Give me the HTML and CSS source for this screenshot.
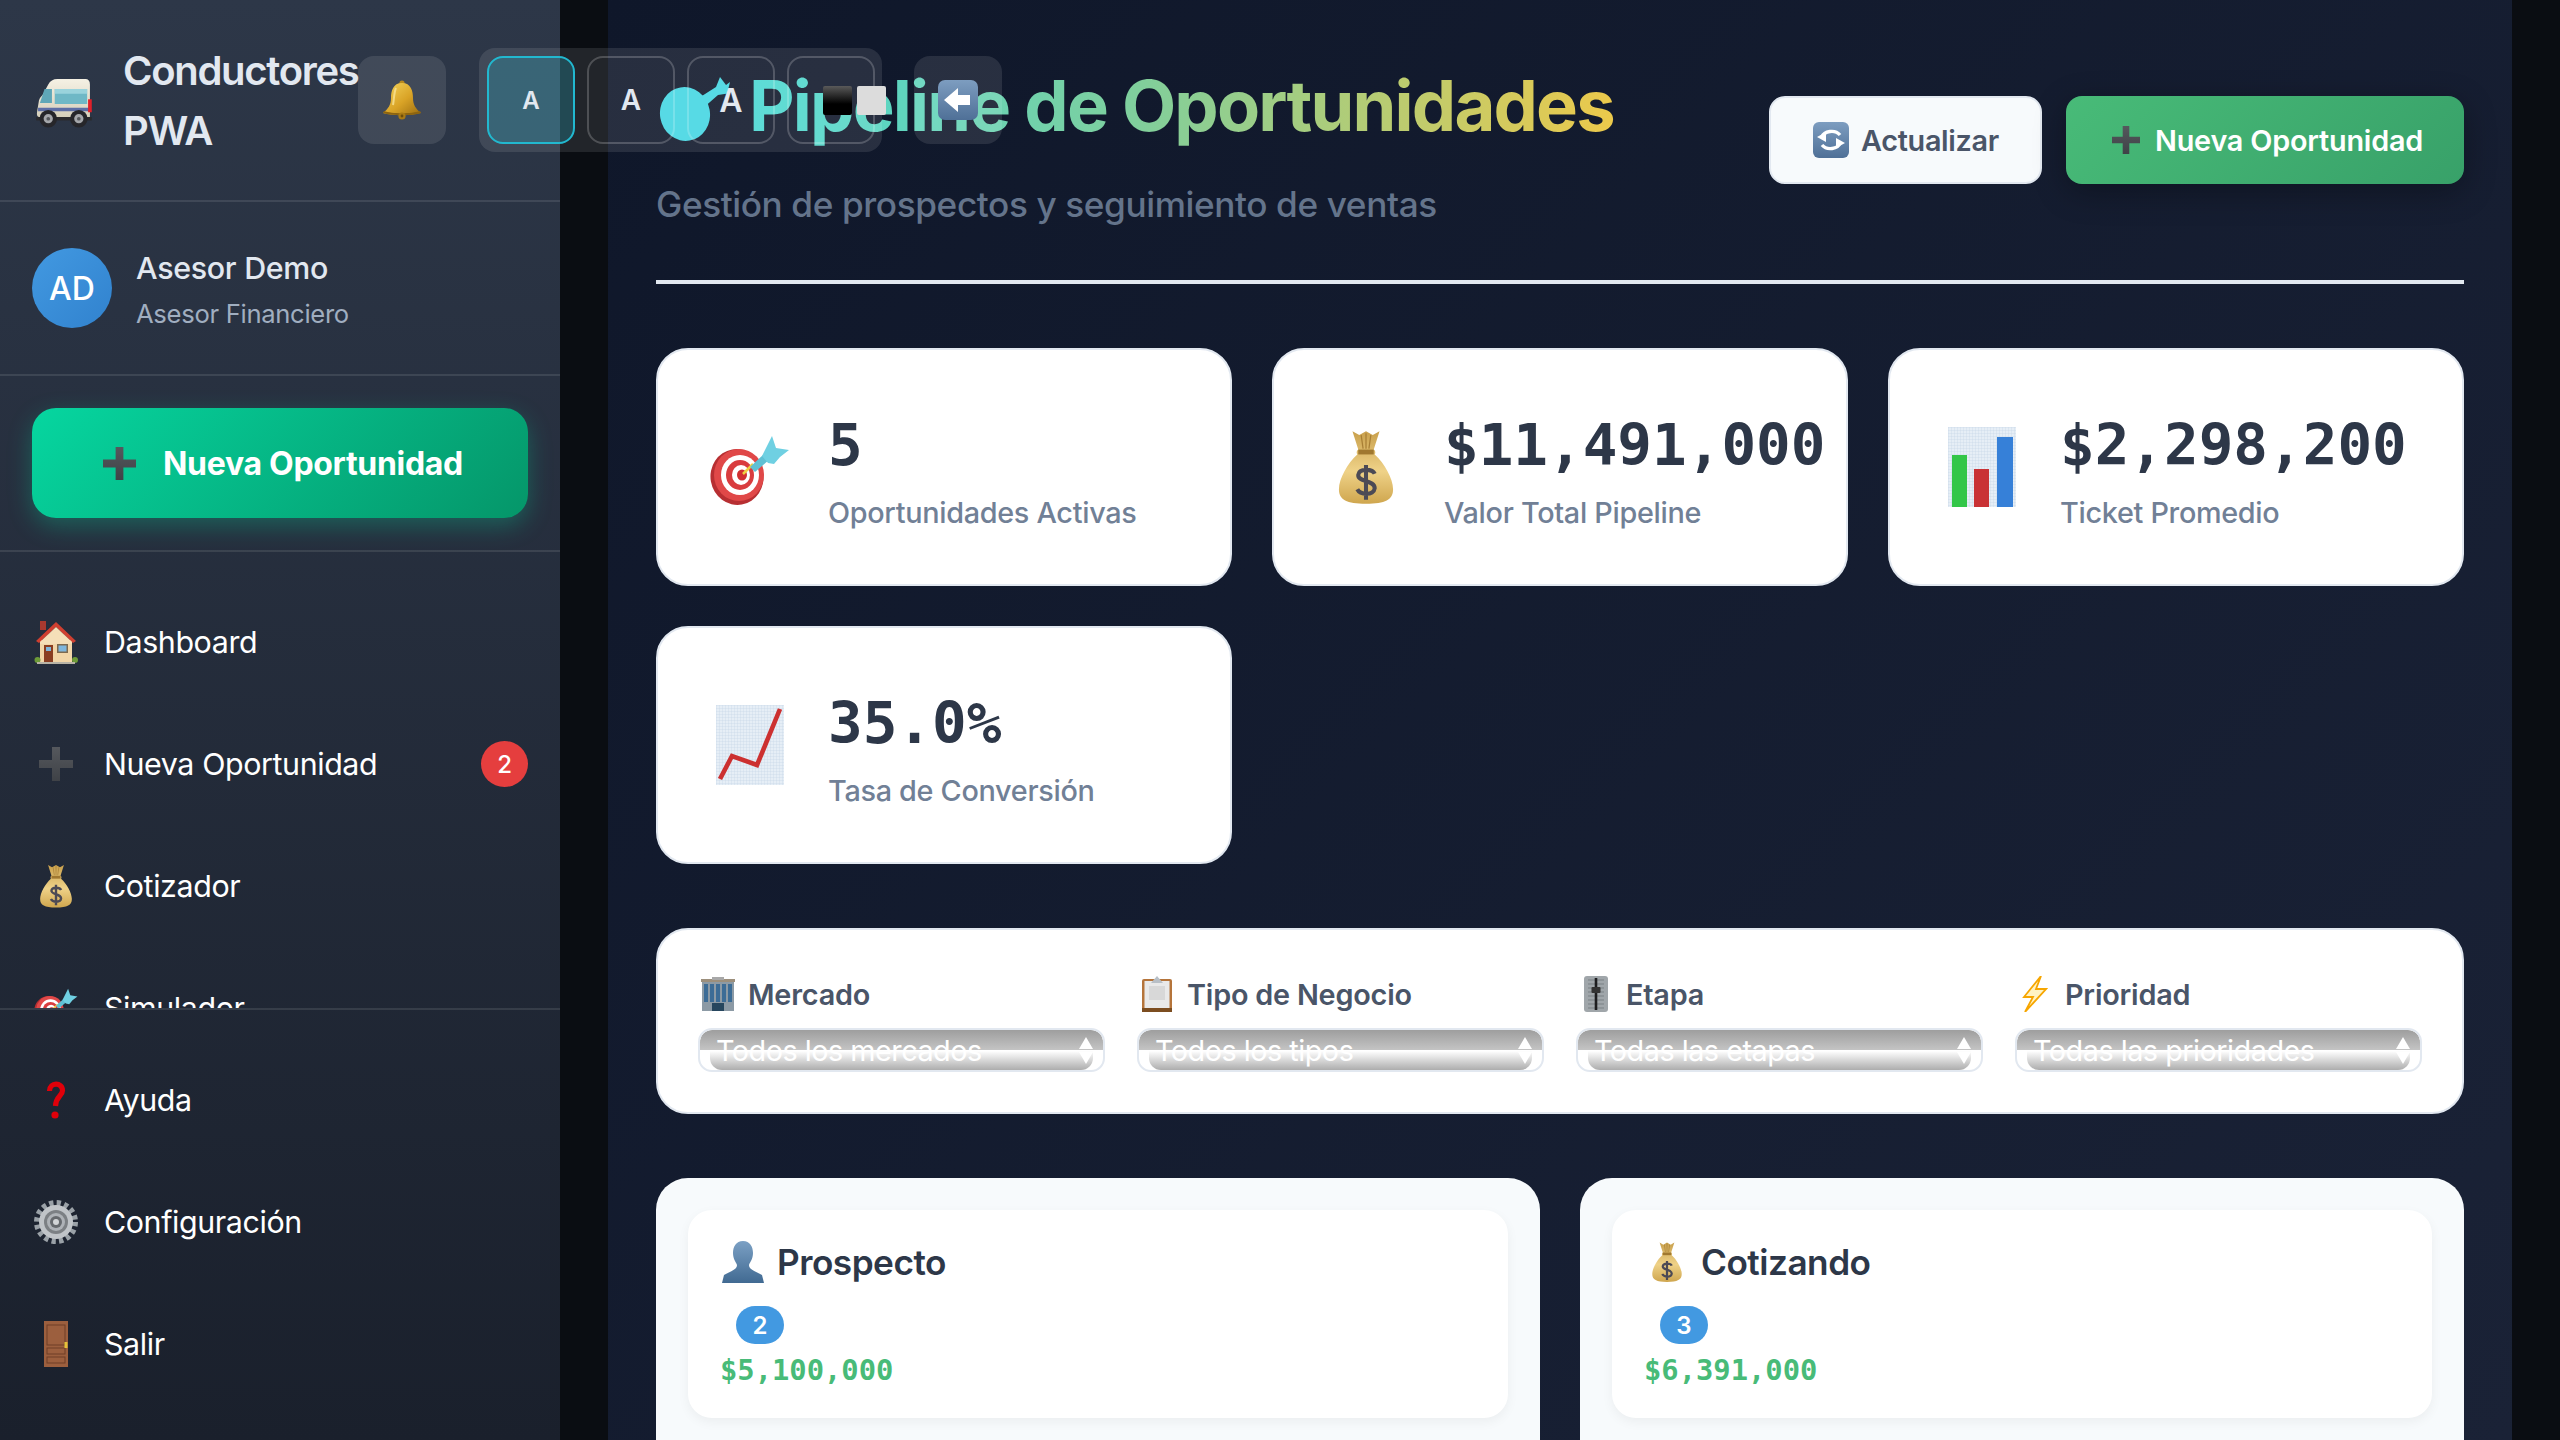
FILE: index.html
```html
<!DOCTYPE html>
<html lang="es">
<head>
<meta charset="utf-8">
<title>Pipeline de Oportunidades</title>
<link rel="stylesheet" href="styles.css">
</head>
<body>
<svg class="defs" width="0" height="0" aria-hidden="true">
  <defs>
    <linearGradient id="gGold" x1="0" y1="0" x2="1" y2="1"><stop offset="0" stop-color="#f5d65e"/><stop offset=".55" stop-color="#d9a326"/><stop offset="1" stop-color="#9a6c10"/></linearGradient>
    <linearGradient id="gBag" x1="0" y1="0" x2="0" y2="1"><stop offset="0" stop-color="#c9a04c"/><stop offset=".55" stop-color="#efd288"/><stop offset="1" stop-color="#cfa64e"/></linearGradient>
    <linearGradient id="gBlue" x1="0" y1="0" x2="0" y2="1"><stop offset="0" stop-color="#7d9dc0"/><stop offset="1" stop-color="#4f7097"/></linearGradient>
    <linearGradient id="gPlus" x1="0" y1="0" x2="0" y2="1"><stop offset="0" stop-color="#55585d"/><stop offset="1" stop-color="#3f4247"/></linearGradient>
    <linearGradient id="gBust" x1="0" y1="0" x2="0" y2="1"><stop offset="0" stop-color="#7ba0c4"/><stop offset="1" stop-color="#416a92"/></linearGradient>
    <linearGradient id="gVan" x1="0" y1="0" x2="0" y2="1"><stop offset="0" stop-color="#f5f1e4"/><stop offset="1" stop-color="#d6d0bb"/></linearGradient>
    <pattern id="pGrid" width="3" height="3" patternUnits="userSpaceOnUse"><rect width="3" height="3" fill="#e6eef6"/><path d="M0 0H3M0 0V3" stroke="#c3d2e2" stroke-width=".6"/></pattern>
    <symbol id="i-van" viewBox="0 0 64 54">
      <path d="M3 36 5 24Q6 21 9 18L15 7Q18 1 25 1H55Q60 1 60 7V42H5Q2 42 3 36Z" fill="url(#gVan)"/>
      <path d="M22 12H57V28H22Z" fill="#6fb8c6"/><path d="M22 12H57V17H22Z" fill="#9ad3dc"/>
      <path d="M11 12H19V27H6Z" fill="#5fa7b8"/>
      <path d="M4 32H60V36H4Z" fill="#5d6ea6"/>
      <path d="M58 23H62V37H58Z" fill="#e0202a"/>
      <path d="M2 42H62V46H2Z" fill="#2b2b2e"/>
      <circle cx="15" cy="44" r="9.5" fill="#26262a"/><circle cx="15" cy="44" r="5" fill="#a5a7ab"/><circle cx="15" cy="44" r="2" fill="#55575b"/>
      <circle cx="48" cy="44" r="9.5" fill="#26262a"/><circle cx="48" cy="44" r="5" fill="#a5a7ab"/><circle cx="48" cy="44" r="2" fill="#55575b"/>
    </symbol>
    <symbol id="i-bell" viewBox="0 0 40 40">
      <circle cx="20" cy="3" r="2.6" fill="#b98a1e"/>
      <path d="M20 3C11 3 9 11 9 18 9 25 6 29 1 33 10 36 30 36 39 33 34 29 31 25 31 18 31 11 29 3 20 3Z" fill="url(#gGold)"/>
      <path d="M14 8C12 12 12 20 11 25" stroke="#fbe9a4" stroke-width="2" fill="none" opacity=".7"/>
      <path d="M1 33C10 36 30 36 39 33L38 31C30 34 10 34 2 31Z" fill="#8d6410"/>
      <circle cx="20" cy="36" r="3.6" fill="#a97a14"/><circle cx="20" cy="36" r="1.4" fill="#6e4c0a"/>
    </symbol>
    <symbol id="i-dart" viewBox="0 0 80 70">
      <ellipse cx="27" cy="41" rx="26.5" ry="28" fill="#b72f32" transform="rotate(-10 27 41)"/>
      <ellipse cx="29" cy="39" rx="25" ry="26" fill="#e04848"/><ellipse cx="30" cy="39" rx="19" ry="20" fill="#fff"/><ellipse cx="30" cy="39" rx="14" ry="15" fill="#d93c3e"/><ellipse cx="31" cy="39" rx="9" ry="10" fill="#fff"/><ellipse cx="32" cy="39" rx="5" ry="5.5" fill="#d02f30"/>
      <path d="M33 38 43 28" stroke="#f0d040" stroke-width="2.5"/>
      <path d="M40 31 54 18 60 23 45 36Z" fill="#5fc0d4"/>
      <path d="M52 20 62 0 66 12 79 14 70 21 64 28 58 27Z" fill="#6fd0e2"/>
    </symbol>
    <symbol id="i-dartmask" viewBox="0 0 80 64">
      <ellipse cx="29" cy="37" rx="25" ry="27" fill="#44d6e2" transform="rotate(-10 29 37)"/>
      <path d="M38 24 60 10 64 0 70 8 74 5 72 13 75 16 62 18 46 32Z" fill="#44d6e2"/>
    </symbol>
    <symbol id="i-bag" viewBox="0 0 60 76">
      <path d="M16 1 23 5 30 1 37 5 44 1 38 20C40 21 40 24 39 25 49 34 58 50 58 61 58 72 50 76 30 76 10 76 2 72 2 61 2 50 11 34 21 25 20 24 20 21 22 20Z" fill="url(#gBag)"/>
      <path d="M22 20H38V25H22Z" fill="#a07830"/>
      <path d="M25 5 27 19M35 5 33 19M30 3V19" stroke="#a87f35" stroke-width="1.3"/>
      <path d="M39 45C37 40 23 39 22 46 21 54 39 51 39 60 38 68 24 67 21 61M30 36V72" stroke="#4c4a55" stroke-width="4.2" fill="none"/>
    </symbol>
    <symbol id="i-bars" viewBox="0 0 68 80">
      <rect width="68" height="80" fill="url(#pGrid)"/>
      <rect x="4" y="28" width="15" height="52" fill="#33c648"/>
      <rect x="26" y="42" width="15" height="38" fill="#c93235"/>
      <rect x="49" y="10" width="16" height="70" fill="#3680d8"/>
    </symbol>
    <symbol id="i-chart" viewBox="0 0 68 80">
      <rect width="68" height="80" fill="url(#pGrid)"/>
      <path d="M4 74 16 51 41 60 64 4" fill="none" stroke="#cc3030" stroke-width="4.6"/>
    </symbol>
    <symbol id="i-refresh" viewBox="0 0 36 36">
      <rect width="36" height="36" rx="6" fill="url(#gBlue)"/>
      <path d="M9 15C11 9 22 7 27 13" stroke="#fff" stroke-width="3.4" fill="none"/><path d="M4 15 13 10 13 20Z" fill="#fff"/>
      <path d="M27 21C25 27 14 29 9 23" stroke="#fff" stroke-width="3.4" fill="none"/><path d="M32 21 23 26 23 16Z" fill="#fff"/>
    </symbol>
    <symbol id="i-back" viewBox="0 0 40 40">
      <rect width="40" height="40" rx="7" fill="url(#gBlue)"/>
      <path d="M6 20 20 8V15H32V25H20V32Z" fill="#fff"/>
    </symbol>
    <symbol id="i-plus" viewBox="0 0 34 34">
      <path d="M13 0H21V13H34V21H21V34H13V21H0V13H13Z" fill="url(#gPlus)"/>
    </symbol>
    <symbol id="i-house" viewBox="0 0 44 44">
      <path d="M6 1H12V10H6Z" fill="#a8392f"/>
      <path d="M6 20H38V43H6Z" fill="#f2d6a8"/>
      <path d="M2 21 22 2 42 21 39 23 22 7 5 23Z" fill="#cf3f30"/>
      <path d="M22 7 38 22V24H6V22Z" fill="#f5dfb8"/>
      <rect x="10" y="25" width="9" height="17" fill="#8a3e22"/><rect x="12" y="27" width="5" height="4" fill="#7fb6dc"/>
      <rect x="23" y="24" width="11" height="9" fill="#7d6a50"/><rect x="24.5" y="25.5" width="8" height="6" fill="#7fb6dc"/>
      <circle cx="3.5" cy="40" r="3" fill="#6d9a38"/><circle cx="41" cy="40" r="3" fill="#6d9a38"/>
      <rect x="3" y="42" width="38" height="2" fill="#b8b3a6"/>
    </symbol>
    <symbol id="i-question" viewBox="0 0 20 38">
      <path d="M3.5 10C3.5 1 16.5 1 16.5 9.5 16.5 15 10 15 9.5 25" fill="none" stroke="#e0000a" stroke-width="5.2"/>
      <circle cx="9" cy="34" r="3.6" fill="#e0000a"/>
    </symbol>
    <symbol id="i-gear" viewBox="0 0 44 44">
      <circle cx="22" cy="22" r="19" fill="none" stroke="#9aa1a7" stroke-width="6" stroke-dasharray="4.2 3.27"/>
      <circle cx="22" cy="22" r="17" fill="#c0c4c8"/>
      <circle cx="22" cy="22" r="12" fill="#7c8084"/><circle cx="22" cy="22" r="9" fill="#aeb2b7"/><circle cx="22" cy="22" r="6" fill="#666a6e"/><circle cx="22" cy="22" r="3" fill="#d2d5d7"/>
    </symbol>
    <symbol id="i-door" viewBox="0 0 24 46">
      <rect width="24" height="46" fill="#9c5f3e"/>
      <g fill="none" stroke="#6f3e26" stroke-width="1"><rect x="3" y="4" width="18" height="20"/><rect x="3" y="27" width="18" height="6"/><rect x="3" y="36" width="18" height="6"/></g>
      <rect x="20.5" y="21" width="3" height="6" fill="#e4c23a"/>
    </symbol>
    <symbol id="i-building" viewBox="0 0 34 34">
      <rect x="1" y="3" width="32" height="31" fill="#8c9aa5"/><rect y="2" width="34" height="3" fill="#9c8f7c"/><rect x="11" y="0" width="12" height="3" fill="#a8a8a8"/>
      <g fill="#3c6c96"><rect x="3" y="7" width="4" height="18"/><rect x="9" y="7" width="4" height="18"/><rect x="15" y="7" width="4" height="18"/><rect x="21" y="7" width="4" height="18"/><rect x="27" y="7" width="4" height="18"/></g>
      <rect x="11" y="26" width="12" height="8" fill="#26465e"/>
    </symbol>
    <symbol id="i-clip" viewBox="0 0 30 36">
      <rect y="3" width="30" height="33" rx="2" fill="#b5743a"/><rect x="2.5" y="5" width="25" height="27" fill="#e9e9e9"/>
      <rect x="7" y="10" width="16" height="14" fill="#d8d8d8"/>
      <path d="M9 7 15 0 21 7Z" fill="#b8bfc6"/><rect x="0" y="32" width="30" height="4" fill="#7c4d20"/>
    </symbol>
    <symbol id="i-knob" viewBox="0 0 24 36">
      <rect width="24" height="36" rx="3" fill="#a0a6aa"/>
      <path d="M4 4H20M4 8H20M4 12H20M4 16H20M4 20H20M4 24H20M4 28H20M4 32H20" stroke="#7b8185" stroke-width="1"/>
      <rect x="10.7" y="2" width="2.6" height="32" fill="#1d1d1f"/><rect x="7.5" y="11" width="9" height="6" rx="1" fill="#333"/>
    </symbol>
    <symbol id="i-bolt" viewBox="0 0 26 36">
      <path d="M19 0 2 21H11L3 36 24 13H14Z" fill="#fff3c4" stroke="#f7a600" stroke-width="1.8"/>
    </symbol>
    <symbol id="i-bust" viewBox="0 0 42 42">
      <path d="M21 0C14 0 11 6 11 12 11 18 14 21 15 24 15 29 7 31 2 34L0 42H42L40 34C35 31 27 29 27 24 28 21 31 18 31 12 31 6 28 0 21 0Z" fill="url(#gBust)"/>
    </symbol>
    <symbol id="i-up" viewBox="0 0 14 12"><path d="M7 0 14 12H0Z" fill="#fff"/></symbol>
    <symbol id="i-down" viewBox="0 0 14 12"><path d="M7 12 14 0H0Z" fill="#fff"/></symbol>
  </defs>
</svg>

<div class="toolbar">
  <button class="tool-btn bell" aria-label="Notificaciones"><svg class="bell-ico"><use href="#i-bell"/></svg></button>
  <div class="font-group">
    <button class="font-btn active fs-s">A</button>
    <button class="font-btn fs-m">A</button>
    <button class="font-btn fs-l">A</button>
    <button class="font-btn contrast" aria-label="Contraste"><span class="sq-black"></span><span class="sq-white"></span></button>
  </div>
  <button class="tool-btn back" aria-label="Volver"><svg class="back-ico"><use href="#i-back"/></svg></button>
</div>

<div class="app">
  <aside class="sidebar">
    <header class="brand">
      <svg class="brand-ico"><use href="#i-van"/></svg>
      <div class="brand-name">Conductores<br>PWA</div>
    </header>
    <section class="user">
      <div class="avatar">AD</div>
      <div class="user-info">
        <div class="user-name">Asesor Demo</div>
        <div class="user-role">Asesor Financiero</div>
      </div>
    </section>
    <section class="cta-wrap">
      <button class="cta"><svg class="cta-ico"><use href="#i-plus"/></svg><span>Nueva Oportunidad</span></button>
    </section>
    <nav class="nav">
      <a class="nav-item"><span class="nav-ico"><svg class="s-house"><use href="#i-house"/></svg></span><span>Dashboard</span></a>
      <a class="nav-item"><span class="nav-ico"><svg class="s-plus"><use href="#i-plus"/></svg></span><span>Nueva Oportunidad</span><span class="nav-badge">2</span></a>
      <a class="nav-item"><span class="nav-ico"><svg class="s-bag"><use href="#i-bag"/></svg></span><span>Cotizador</span></a>
      <a class="nav-item"><span class="nav-ico"><svg class="s-dart"><use href="#i-dart"/></svg></span><span>Simulador</span></a>
    </nav>
    <div class="nav-bottom">
      <a class="nav-item"><span class="nav-ico"><svg class="s-question"><use href="#i-question"/></svg></span><span>Ayuda</span></a>
      <a class="nav-item"><span class="nav-ico"><svg class="s-gear"><use href="#i-gear"/></svg></span><span>Configuración</span></a>
      <a class="nav-item"><span class="nav-ico"><svg class="s-door"><use href="#i-door"/></svg></span><span>Salir</span></a>
    </div>
  </aside>

  <main class="main">
    <header class="page-head">
      <div>
        <h1 class="title"><svg class="title-ico"><use href="#i-dartmask"/></svg><span class="title-text">Pipeline de Oportunidades</span></h1>
        <p class="subtitle">Gestión de prospectos y seguimiento de ventas</p>
      </div>
      <div class="head-actions">
        <button class="btn btn-light"><svg class="btn-ico-r"><use href="#i-refresh"/></svg><span>Actualizar</span></button>
        <button class="btn btn-green"><svg class="btn-ico-p"><use href="#i-plus"/></svg><span>Nueva Oportunidad</span></button>
      </div>
    </header>

    <section class="stats">
      <article class="stat"><span class="stat-ico"><svg class="st-dart"><use href="#i-dart"/></svg></span><div class="stat-body"><div class="stat-value">5</div><div class="stat-label">Oportunidades Activas</div></div></article>
      <article class="stat"><span class="stat-ico"><svg class="st-bag"><use href="#i-bag"/></svg></span><div class="stat-body"><div class="stat-value">$11,491,000</div><div class="stat-label">Valor Total Pipeline</div></div></article>
      <article class="stat"><span class="stat-ico"><svg class="st-chart"><use href="#i-bars"/></svg></span><div class="stat-body"><div class="stat-value">$2,298,200</div><div class="stat-label">Ticket Promedio</div></div></article>
      <article class="stat"><span class="stat-ico"><svg class="st-chart"><use href="#i-chart"/></svg></span><div class="stat-body"><div class="stat-value">35.0%</div><div class="stat-label">Tasa de Conversión</div></div></article>
    </section>

    <section class="filters">
      <div class="filter">
        <label class="filter-label"><span class="f-ico"><svg class="f-building"><use href="#i-building"/></svg></span>Mercado</label>
        <div class="select"><select><option>Todos los mercados</option></select><svg class="arr arr-up"><use href="#i-up"/></svg><svg class="arr arr-down"><use href="#i-down"/></svg></div>
      </div>
      <div class="filter">
        <label class="filter-label"><span class="f-ico"><svg class="f-clip"><use href="#i-clip"/></svg></span>Tipo de Negocio</label>
        <div class="select"><select><option>Todos los tipos</option></select><svg class="arr arr-up"><use href="#i-up"/></svg><svg class="arr arr-down"><use href="#i-down"/></svg></div>
      </div>
      <div class="filter">
        <label class="filter-label"><span class="f-ico"><svg class="f-knob"><use href="#i-knob"/></svg></span>Etapa</label>
        <div class="select"><select><option>Todas las etapas</option></select><svg class="arr arr-up"><use href="#i-up"/></svg><svg class="arr arr-down"><use href="#i-down"/></svg></div>
      </div>
      <div class="filter">
        <label class="filter-label"><span class="f-ico"><svg class="f-bolt"><use href="#i-bolt"/></svg></span>Prioridad</label>
        <div class="select"><select><option>Todas las prioridades</option></select><svg class="arr arr-up"><use href="#i-up"/></svg><svg class="arr arr-down"><use href="#i-down"/></svg></div>
      </div>
    </section>

    <section class="board">
      <div class="column">
        <div class="stage">
          <h3 class="stage-title"><span class="stage-ico"><svg class="k-bust"><use href="#i-bust"/></svg></span>Prospecto</h3>
          <span class="stage-badge">2</span>
          <div class="stage-amount">$5,100,000</div>
        </div>
      </div>
      <div class="column">
        <div class="stage">
          <h3 class="stage-title"><span class="stage-ico"><svg class="k-bag"><use href="#i-bag"/></svg></span>Cotizando</h3>
          <span class="stage-badge">3</span>
          <div class="stage-amount">$6,391,000</div>
        </div>
      </div>
    </section>
  </main>
</div>
</body>
</html>
```

FILE: styles.css
```css
* { box-sizing: border-box; }
html, body { margin: 0; height: 100%; }
body {
  background: #0a0d12;
  font-family: Inter, "Noto Sans", sans-serif;
  overflow: hidden;
  position: relative;
}
.defs { position: absolute; }
svg { display: block; }
button { font-family: inherit; cursor: pointer; }

.app { display: flex; height: 1440px; }

/* Sidebar */
.sidebar {
  width: 560px;
  flex: none;
  height: 1440px;
  display: flex;
  flex-direction: column;
  overflow: hidden;
  color: #fff;
  background: linear-gradient(180deg, #2d3748 0%, #1a202c 100%);
}
.brand {
  height: 202px;
  flex: none;
  display: flex;
  align-items: center;
  gap: 29px;
  padding-left: 34px;
  border-bottom: 2px solid rgba(255,255,255,.1);
}
.brand-ico { width: 60px; height: 50px; margin-top: 6px; }
.brand-name { font-size: 40px; line-height: 60px; font-weight: 600; letter-spacing: -1.3px; color: #e2e8f0; padding-top: 2px; }

.user {
  height: 174px;
  flex: none;
  display: flex;
  align-items: center;
  gap: 24px;
  padding-left: 32px;
  border-bottom: 2px solid rgba(255,255,255,.1);
}
.avatar {
  width: 80px; height: 80px;
  border-radius: 50%;
  background: linear-gradient(135deg, #4299e1, #3182ce);
  display: flex; align-items: center; justify-content: center;
  font-size: 32px; font-weight: 500; color: #fff;
}
.user-info { padding-top: 3px; }
.user-name { font-size: 30.4px; line-height: 44px; font-weight: 500; letter-spacing: -.3px; color: #e2e8f0; }
.user-role { font-size: 25.6px; line-height: 40px; margin-top: 4px; letter-spacing: -.3px; color: #a0aec0; }

.cta-wrap {
  height: 176px;
  flex: none;
  padding: 32px;
  border-bottom: 2px solid rgba(255,255,255,.1);
}
.cta {
  width: 100%; height: 110px;
  border: 0;
  border-radius: 24px;
  background: linear-gradient(135deg, #06d6a0, #059669);
  box-shadow: 0 8px 24px rgba(6,214,160,.3);
  color: #fff;
  font-size: 32px; font-weight: 700; letter-spacing: -.3px;
  display: flex; align-items: center; justify-content: center; gap: 27px;
  padding: 0 0 0 6px;
}
.cta-ico { width: 33px; height: 33px; }

.nav {
  flex: 1;
  min-height: 0;
  overflow: hidden;
  padding-top: 29px;
}
.nav-bottom {
  flex: none;
  height: 432px;
  padding-top: 29px;
  border-top: 2px solid rgba(255,255,255,.1);
}
.nav-item {
  height: 122px;
  display: flex;
  align-items: center;
  gap: 24px;
  padding: 0 32px;
  font-size: 30.4px;
  letter-spacing: -.4px;
  color: #fff;
}
.nav-ico { width: 48px; height: 48px; flex: none; display: flex; align-items: center; justify-content: center; }
.s-house { width: 44px; height: 44px; }
.s-plus { width: 34px; height: 34px; }
.s-bag { width: 34px; height: 44px; }
.s-dart { width: 44px; height: 44px; }
.s-question { width: 20px; height: 38px; }
.s-gear { width: 44px; height: 44px; }
.s-door { width: 24px; height: 46px; }
.nav-badge {
  margin-left: auto;
  width: 47px; height: 46px;
  border-radius: 50%;
  background: #e53e3e;
  color: #fff;
  font-size: 24px; font-weight: 500;
  display: flex; align-items: center; justify-content: center;
}

/* Floating toolbar lying over sidebar and page */
.toolbar {
  position: absolute;
  z-index: 5;
  left: 358px;
  top: 48px;
  display: flex;
  align-items: center;
  gap: 32px;
}
.tool-btn {
  width: 88px; height: 88px;
  border: 0;
  border-radius: 16px;
  background: rgba(255,255,255,.1);
  display: flex; align-items: center; justify-content: center;
  padding: 0;
}
.bell-ico { width: 40px; height: 40px; }
.back-ico { width: 40px; height: 40px; }
.font-group {
  width: 403px; height: 104px;
  margin-left: 1px;
  padding: 8px;
  display: flex;
  gap: 12px;
  border-radius: 16px;
  background: rgba(255,255,255,.1);
}
.font-btn {
  width: 88px; height: 88px;
  flex: none;
  border: 2px solid rgba(255,255,255,.2);
  border-radius: 16px;
  background: transparent;
  color: #e2e8f0;
  font-weight: 600;
  padding: 0;
}
.font-btn.active { border-color: #22b8cf; background: rgba(34,184,207,.25); }
.fs-s { font-size: 24px; }
.fs-m { font-size: 28px; }
.fs-l { font-size: 32px; }
.contrast { display: flex; align-items: center; justify-content: flex-start; gap: 5px; padding-left: 34px; overflow: visible; }
.sq-black { width: 29px; height: 29px; flex: none; background: linear-gradient(180deg, #5a5a5a, #000 62%); border-radius: 2px; }
.sq-white { width: 29px; height: 29px; flex: none; background: #dcdcdc; border-radius: 2px; }

/* Main */
.main {
  width: 1904px;
  flex: none;
  margin-left: 48px;
  height: 1440px;
  overflow: hidden;
  padding: 48px;
  background: linear-gradient(135deg, #0f172a 0%, #1a2236 100%);
}
.page-head {
  display: flex;
  align-items: center;
  justify-content: space-between;
  padding-bottom: 48px;
  border-bottom: 4px solid #e2e8f0;
  margin-bottom: 64px;
}
.title {
  margin: 0;
  height: 114px;
  display: flex;
  align-items: center;
  gap: 13px;
  font-size: 70.4px;
  font-weight: 700;
  letter-spacing: -1.8px;
}
.title-ico { width: 80px; height: 64px; margin-top: 8px; }
.title-text {
  background: linear-gradient(90deg, #4ad8d4 0%, #80cf9c 45%, #ecc94b 100%);
  -webkit-background-clip: text;
  background-clip: text;
  color: transparent;
}
.subtitle { margin: 14px 0 0; font-size: 35.2px; line-height: 56px; font-weight: 500; letter-spacing: -.4px; color: #64748b; }
.head-actions { display: flex; gap: 24px; }
.btn {
  height: 88px;
  border-radius: 16px;
  font-size: 28.8px;
  font-weight: 600;
  display: flex; align-items: center;
  padding: 0;
}
.btn-light { width: 273px; padding-left: 42px; gap: 12px; letter-spacing: -.3px; background: #f7fafc; border: 2px solid #e2e8f0; color: #4a5568; }
.btn-green { width: 398px; padding-left: 46px; gap: 15px; letter-spacing: -.2px; border: 0; background: linear-gradient(135deg, #48bb78, #38a169); color: #fff; box-shadow: 0 8px 32px rgba(0,0,0,.3); }
.btn-ico-r { width: 36px; height: 36px; }
.btn-ico-p { width: 28px; height: 28px; }

.stats {
  display: grid;
  grid-template-columns: repeat(3, 1fr);
  gap: 40px;
  margin-bottom: 64px;
}
.stat {
  height: 238px;
  background: #fff;
  border: 2px solid #e2e8f0;
  border-radius: 32px;
  display: flex;
  align-items: center;
  gap: 34px;
  padding: 0 0 0 48px;
}
.stat-ico { width: 88px; height: 88px; flex: none; display: flex; align-items: center; justify-content: center; }
.st-dart { width: 80px; height: 70px; margin-top: 8px; }
.st-bag { width: 58px; height: 76px; }
.st-chart { width: 68px; height: 80px; }
.stat-body { padding-top: 13px; }
.stat-value {
  font-family: "DejaVu Sans Mono", monospace;
  font-weight: 700;
  font-size: 57.6px;
  line-height: 70px;
  color: #2d3748;
  white-space: nowrap;
}
.stat-label { font-size: 28.8px; line-height: 46px; margin-top: 9px; font-weight: 500; letter-spacing: -.3px; color: #718096; }

.filters {
  display: grid;
  grid-template-columns: repeat(4, 1fr);
  gap: 32px;
  background: #fff;
  border: 2px solid #e2e8f0;
  border-radius: 32px;
  padding: 40px;
  margin-bottom: 64px;
}
.filter-label {
  display: flex;
  align-items: center;
  gap: 10px;
  height: 48px;
  margin-bottom: 10px;
  font-size: 28.8px;
  font-weight: 600;
  letter-spacing: -.2px;
  color: #4a5568;
}
.f-ico { width: 40px; height: 40px; flex: none; display: flex; align-items: center; justify-content: center; }
.f-building { width: 34px; height: 34px; }
.f-clip { width: 30px; height: 36px; }
.f-knob { width: 24px; height: 36px; }
.f-bolt { width: 26px; height: 36px; }

/* Native glossy select look */
.select {
  position: relative;
  height: 44px;
  border: 2px solid #e2e8f0;
  border-radius: 14px;
  background: #fff;
  overflow: hidden;
}
.select::before {
  content: "";
  position: absolute;
  left: 0; right: 0; top: 0;
  height: 20px;
  border-radius: 12px 12px 0 0;
  background: linear-gradient(180deg, #9e9e9e, #c4c4c4);
}
.select::after {
  content: "";
  position: absolute;
  left: 10px; right: 10px; top: 21px; bottom: 0;
  border-radius: 0 0 12px 12px;
  background: linear-gradient(180deg, #ffffff, #adadad);
}
.select select {
  position: relative;
  z-index: 1;
  width: 100%;
  height: 40px;
  -webkit-appearance: none;
  appearance: none;
  border: 0;
  outline: 0;
  background: transparent;
  color: #fff;
  font-family: inherit;
  font-size: 28.8px;
  letter-spacing: -.5px;
  padding: 0 0 0 16px;
}
.arr { position: absolute; z-index: 2; right: 10px; width: 14px; height: 12px; }
.arr-up { top: 7px; }
.arr-down { top: 22px; }

.board {
  display: grid;
  grid-template-columns: repeat(2, 1fr);
  gap: 40px;
}
.column {
  min-height: 400px;
  background: #f7fafc;
  border-radius: 32px;
  padding: 32px;
}
.stage {
  height: 208px;
  background: #fff;
  border-radius: 24px;
  box-shadow: 0 4px 12px rgba(0,0,0,.05);
  padding: 32px 32px 0;
}
.stage-title {
  margin: 0 0 24px;
  height: 40px;
  display: flex;
  align-items: center;
  gap: 12px;
  font-size: 35.2px;
  font-weight: 600;
  letter-spacing: -.5px;
  color: #2d3748;
}
.stage-ico { width: 45px; height: 44px; flex: none; display: flex; align-items: center; justify-content: center; }
.k-bust { width: 42px; height: 42px; }
.k-bag { width: 32px; height: 40px; }
.stage-badge {
  display: flex;
  align-items: center;
  justify-content: center;
  width: 48px; height: 38px;
  margin-left: 16px;
  border-radius: 19px;
  background: #4299e1;
  color: #fff;
  font-size: 24px;
  font-weight: 600;
}
.stage-amount {
  margin-top: 4px;
  line-height: 44px;
  font-family: "DejaVu Sans Mono", monospace;
  font-weight: 700;
  font-size: 28.8px;
  color: #48bb78;
}
```
